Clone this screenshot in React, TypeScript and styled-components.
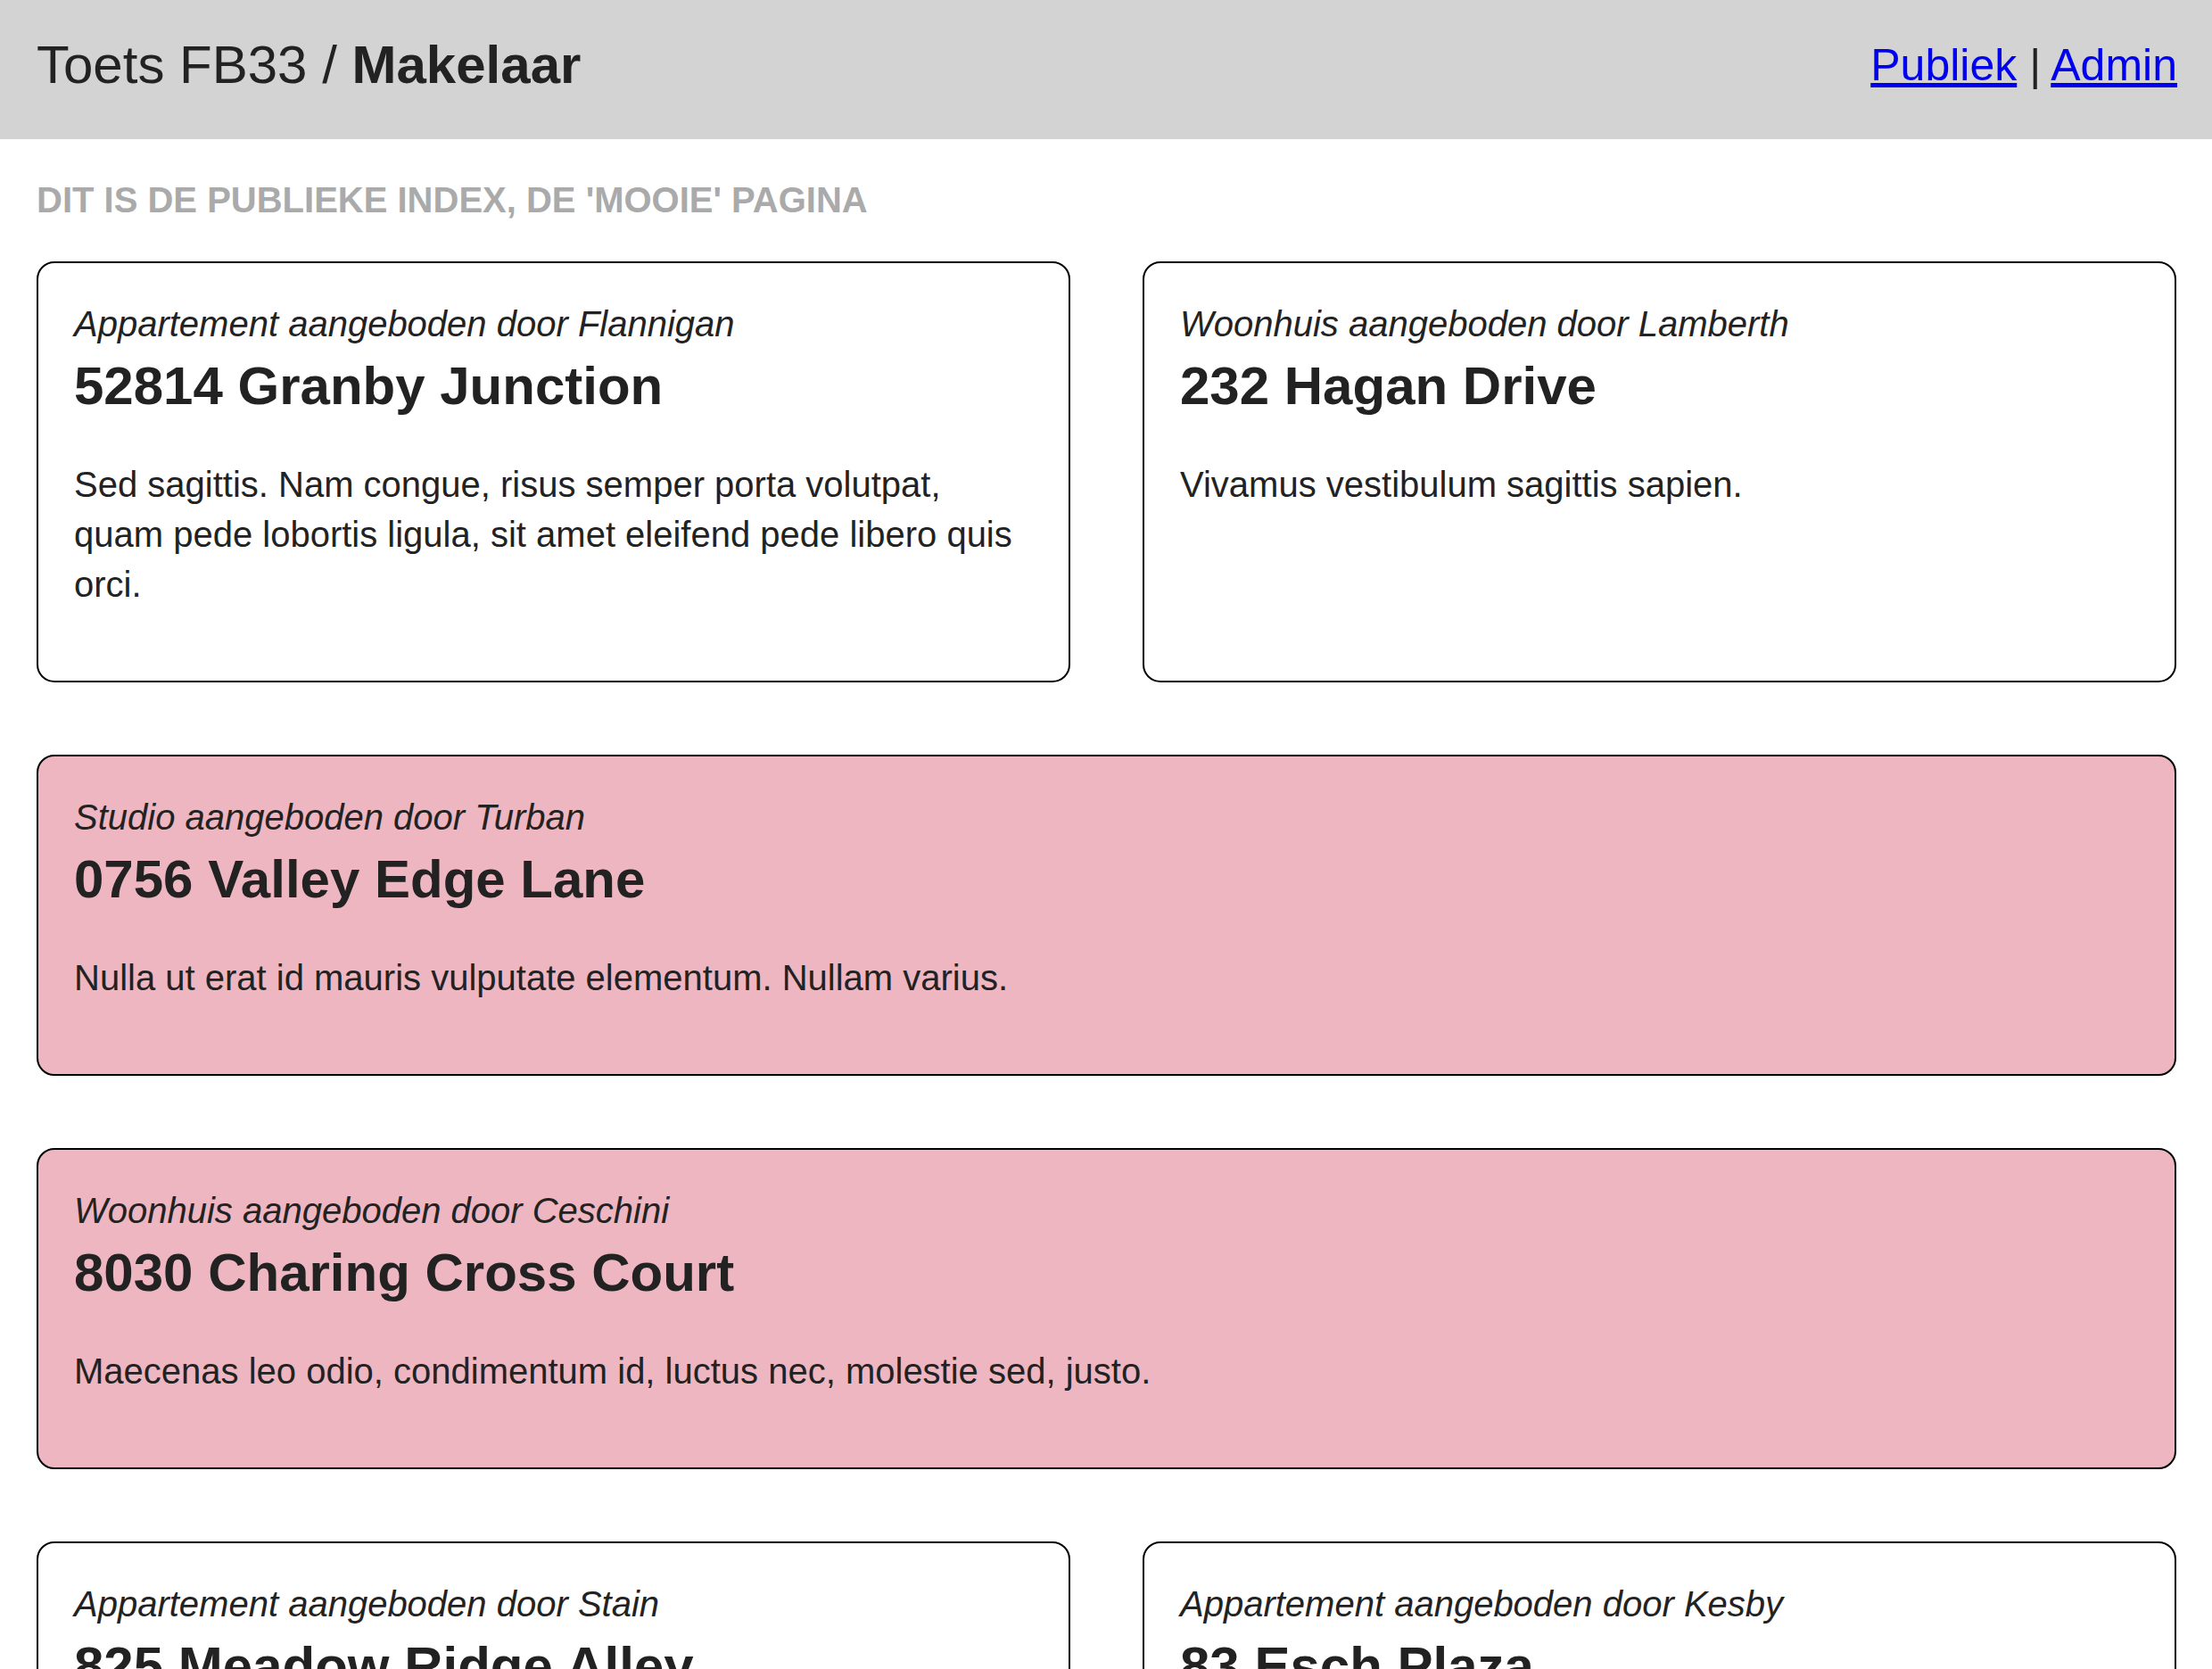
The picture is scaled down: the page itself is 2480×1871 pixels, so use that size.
import styled, { createGlobalStyle } from "styled-components";

// Global page reset and base font
const GlobalStyle = createGlobalStyle`
  * {
    box-sizing: border-box;
  }
  body {
    margin: 0;
    background: #ffffff;
    color: #222222;
    font-family: "Liberation Sans", Arial, sans-serif;
    font-size: 40px;
    line-height: 56px;
  }
`;

type Listing = {
  type: string;
  broker: string;
  address: string;
  description: string;
  featured?: boolean;
};

const listings: Listing[] = [
  {
    type: "Appartement",
    broker: "Flannigan",
    address: "52814 Granby Junction",
    description:
      "Sed sagittis. Nam congue, risus semper porta volutpat, quam pede lobortis ligula, sit amet eleifend pede libero quis orci.",
  },
  {
    type: "Woonhuis",
    broker: "Lamberth",
    address: "232 Hagan Drive",
    description: "Vivamus vestibulum sagittis sapien.",
  },
  {
    type: "Studio",
    broker: "Turban",
    address: "0756 Valley Edge Lane",
    description: "Nulla ut erat id mauris vulputate elementum. Nullam varius.",
    featured: true,
  },
  {
    type: "Woonhuis",
    broker: "Ceschini",
    address: "8030 Charing Cross Court",
    description: "Maecenas leo odio, condimentum id, luctus nec, molestie sed, justo.",
    featured: true,
  },
  {
    type: "Appartement",
    broker: "Stain",
    address: "825 Meadow Ridge Alley",
    description: "Proin interdum mauris non ligula pellentesque ultrices.",
  },
  {
    type: "Appartement",
    broker: "Kesby",
    address: "83 Esch Plaza",
    description: "Curabitur in libero ut massa volutpat convallis.",
  },
];

// Top bar
const Header = styled.header`
  display: flex;
  align-items: center;
  justify-content: space-between;
  height: 156px;
  padding: 0 39px 10px 41px;
  background: #d3d3d3;
`;

const Brand = styled.h1`
  margin: 0;
  font-size: 60px;
  line-height: 84px;
  font-weight: 400;
  color: #222222;

  strong {
    font-weight: 700;
  }
`;

const Nav = styled.nav`
  font-size: 50px;
  line-height: 70px;
  color: #222222;
`;

const NavLink = styled.a`
  color: #0000ee;
  text-decoration: underline;
`;

// Page body
const Main = styled.main`
  padding: 0 40px 80px 41px;
`;

const PageTitle = styled.h2`
  margin: 40px 0 41px;
  font-size: 40px;
  line-height: 56px;
  font-weight: 700;
  text-transform: uppercase;
  color: #aaaaaa;
`;

const Grid = styled.section`
  display: grid;
  grid-template-columns: repeat(2, 1fr);
  gap: 81px;
`;

const Card = styled.article<{ $featured?: boolean }>`
  grid-column: ${({ $featured }) => ($featured ? "1 / -1" : "auto")};
  padding: 40px;
  border: 2px solid #000000;
  border-radius: 20px;
  background: ${({ $featured }) => ($featured ? "#eeb6c1" : "#ffffff")};
`;

const Offer = styled.p`
  margin: 0;
  font-style: italic;
`;

const Address = styled.h3`
  margin: 0;
  font-size: 60px;
  line-height: 84px;
  font-weight: 700;
`;

const Description = styled.p`
  margin: 40px 0;
`;

export default function App() {
  return (
    <>
      <GlobalStyle />
      <Header>
        <Brand>
          Toets FB33 / <strong>Makelaar</strong>
        </Brand>
        <Nav>
          <NavLink href="#">Publiek</NavLink> | <NavLink href="#">Admin</NavLink>
        </Nav>
      </Header>
      <Main>
        <PageTitle>Dit is de publieke index, de 'mooie' pagina</PageTitle>
        <Grid>
          {listings.map((l, i) => (
            <Card key={i} $featured={l.featured}>
              <Offer>
                {l.type} aangeboden door {l.broker}
              </Offer>
              <Address>{l.address}</Address>
              <Description>{l.description}</Description>
            </Card>
          ))}
        </Grid>
      </Main>
    </>
  );
}
